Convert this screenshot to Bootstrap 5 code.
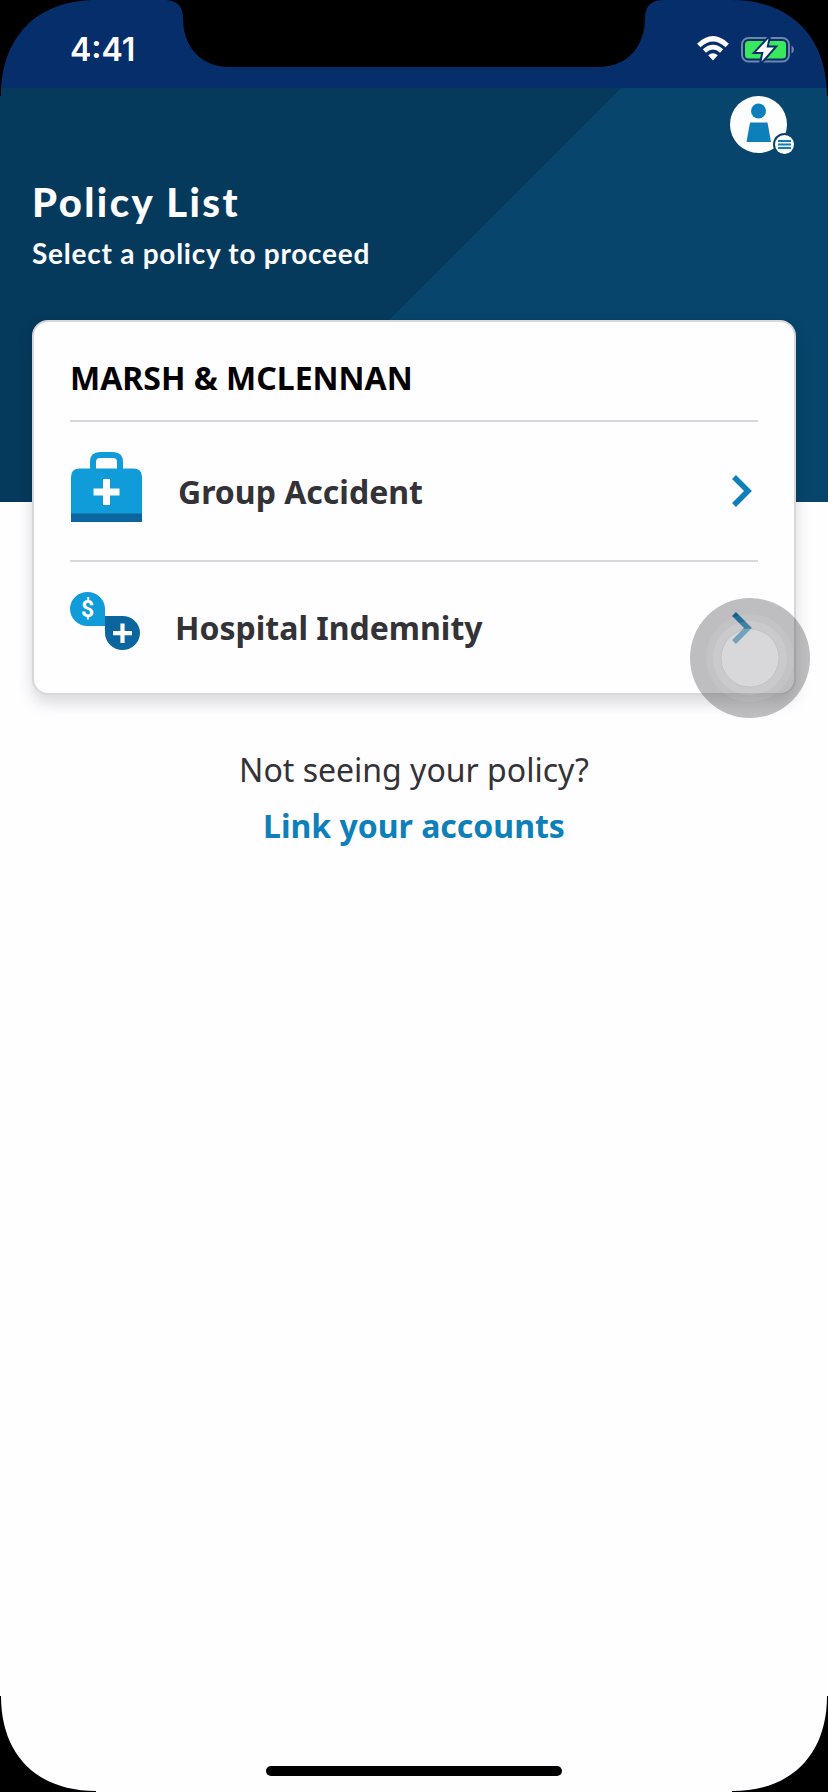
<!DOCTYPE html>
<html lang="en">
<head>
<meta charset="utf-8">
<meta name="viewport" content="width=device-width, initial-scale=1">
<title>Policy List</title>
<link href="https://cdn.jsdelivr.net/npm/bootstrap@5.3.0/dist/css/bootstrap.min.css" rel="stylesheet">
<style>
body{margin:0;background:#fefdff;font-family:"Noto Sans",sans-serif;color:#333236;overflow:hidden}
.screen{width:828px;height:1792px;background:#fefdff}
.bezel{left:0;top:0;z-index:5;pointer-events:none}
.status{height:88px;background:#052e6b;padding:0 33px 0 70px}
.clock{font:600 32px/40px Inter,sans-serif;color:#fff;margin-top:30px}
.status-icons{gap:12px;margin-top:36px}
.hero{height:414px;background:linear-gradient(135deg,#053a5d 439px,#07456c 440px);padding:8px 32px 0;color:#fefdff}
.hero h1{font:900 40px/48px Lato,sans-serif;letter-spacing:2.45px;margin:18px 0 0}
.hero p{font:700 28px/34px Lato,sans-serif;letter-spacing:.75px;margin:10px 0 0}
.profile{height:64px}
.policies{margin:-182px 32px 0;height:375px;border:2px solid #d8d7da;border-radius:16px;padding:0 36px;background:#fefdff;box-shadow:0 8px 16px rgba(0,0,0,.15)}
.group-name{font-size:32px;line-height:44px;font-weight:700;color:#000;height:98px;padding-top:34px;margin:0;white-space:nowrap}
.policy{border-top:2px solid #d8d7da;color:#333236;text-decoration:none;font-size:32px;line-height:44px;font-weight:700;padding-right:6px}
.policy.first{height:140px}
.policy.second{height:133px}
.t-group{margin-left:36px;padding-top:1px}
.t-hospital{margin-left:35px}
.icon-bag{margin-bottom:9px}
.icon-care{margin-bottom:13px}
.link{color:#0e80b9;font-weight:700;text-decoration:none}
.help{font-size:32px;line-height:56px;margin-top:47px}
.touch{left:690px;top:598px;z-index:4}
.homebar{width:296px;height:10px;border-radius:5px;background:#000;margin-bottom:16px}
</style>
</head>
<body>
<div class="screen position-relative d-flex flex-column overflow-hidden">
  <div class="status d-flex justify-content-between align-items-start">
    <div class="clock">4:41</div>
    <div class="status-icons d-flex">
      <svg width="32" height="26" viewBox="0 0 32 26" fill="none" stroke="#fefdff">
        <path d="M1.8 9.5Q16-4 30.2 9.5" stroke-width="5"/>
        <path d="M7.4 15Q16 7.4 24.6 15" stroke-width="4.6"/>
        <path d="M11.2 19.3Q16 15.4 20.8 19.3L16 24.6z" fill="#fefdff" stroke="none"/>
      </svg>
      <svg width="54" height="27" viewBox="0 0 54 27">
        <rect x="1" y="2" width="47" height="23.5" rx="6.5" fill="none" stroke="#6d86b0" stroke-width="2"/>
        <path d="M50.5 9.5Q53 11 53 13.5T50.5 17.5z" fill="#6d86b0"/>
        <rect x="4" y="5" width="41" height="17.5" rx="3.5" fill="#39e85d"/>
        <path d="M27.5 2.5L15 16H22.5L20.5 25.5L33 11.5H25.5z" fill="#fefdff" stroke="#052e6b" stroke-width="4" paint-order="stroke"/>
      </svg>
    </div>
  </div>
  <header class="hero">
    <div class="profile d-flex justify-content-end">
      <svg width="66" height="60" viewBox="0 0 66 60">
        <circle cx="28.5" cy="28.5" r="28.5" fill="#fefdff"/>
        <circle cx="28.5" cy="15" r="7.5" fill="#0e80b9"/>
        <path d="M20 26.5H37.5L41 46H16.5z" fill="#0e80b9"/>
        <circle cx="54.5" cy="48.5" r="11.5" fill="#07456c"/>
        <circle cx="54.5" cy="48.5" r="9.5" fill="#fefdff"/>
        <path d="M48 45H61M48 48.5H61M48 52H61" stroke="#0e80b9" stroke-width="1.8"/>
      </svg>
    </div>
    <h1>Policy List</h1>
    <p>Select a policy to proceed</p>
  </header>
  <main>
    <section class="policies card">
      <h2 class="group-name">MARSH &amp; MCLENNAN</h2>
      <a href="#" class="policy first d-flex align-items-center">
        <svg class="icon-bag" width="72" height="72" viewBox="0 0 72 72">
          <path d="M23 20V11Q23 4 30 4H43Q50 4 50 11V20" fill="none" stroke="#109bd9" stroke-width="6"/>
          <path d="M1 63V26Q1 17.5 9.5 17.5H63.500Q72 17.5 72 26V63z" fill="#109bd9"/>
          <path d="M1 62.5H72V71H1z" fill="#0b66a0"/>
          <path d="M36.5 28V54M23.5 41H49.5" stroke="#fefdff" stroke-width="7"/>
        </svg>
        <span class="flex-grow-1 t-group">Group Accident</span>
        <svg width="20" height="32" viewBox="0 0 20 32" fill="none" stroke="#0e80b9" stroke-width="5.5"><path d="M2 2L16 16L2 30"/></svg>
      </a>
      <a href="#" class="policy second d-flex align-items-center">
        <svg class="icon-care" width="70" height="58" viewBox="0 0 70 58">
          <path d="M17.500 0A17.500 17 0 0 1 35 17V34H17.500A17.500 17 0 0 1 17.500 0z" fill="#109bd9"/>
          <path d="M35 24H52.500A17.500 17 0 1 1 35 41z" fill="#0b66a0"/>
          <text x="17.500" y="25" text-anchor="middle" font-family="Roboto,sans-serif" font-size="23" font-weight="700" fill="#fefdff">$</text>
          <path d="M52.500 31.500V51M43 41.200H62" stroke="#fefdff" stroke-width="4.200"/>
        </svg>
        <span class="flex-grow-1 t-hospital">Hospital Indemnity</span>
        <svg width="20" height="32" viewBox="0 0 20 32" fill="none" stroke="#0e80b9" stroke-width="5.5"><path d="M2 2L16 16L2 30"/></svg>
      </a>
    </section>
    <div class="help text-center">
      <div>Not seeing your policy?</div>
      <a href="#" class="link">Link your accounts</a>
    </div>
  </main>
  <div class="homebar mt-auto mx-auto flex-shrink-0"></div>

  <!-- floating touch button -->
  <svg class="touch position-absolute" width="120" height="120" viewBox="0 0 120 120">
    <circle cx="60" cy="60" r="60" fill="#19191c" fill-opacity=".28"/>
    <circle cx="60" cy="60" r="44" fill="#fff" fill-opacity=".08"/>
    <circle cx="60" cy="60" r="37" fill="#fff" fill-opacity=".13"/>
    <circle cx="60" cy="60" r="29" fill="#fff" fill-opacity=".27" stroke="#b5b4b8" stroke-opacity=".5"/>
  </svg>
  <!-- rounded device corners and notch -->
  <svg class="bezel position-absolute" width="828" height="1792" viewBox="0 0 828 1792">
    <path d="M0 0H96C37 0 1 37 1 96H0zM828 0H732C791 0 827 37 827 96H828zM0 1792V1696H1C1 1755 37 1791 96 1791V1792zM828 1792V1696H827C827 1755 791 1791 732 1791V1792z"/>
    <path d="M166 0Q183 1 183 18C183 46 200 67 230 67H598C628 67 645 46 645 18Q645 1 662 0z"/>
  </svg>
</div>
<script src="https://cdn.jsdelivr.net/npm/bootstrap@5.3.0/dist/js/bootstrap.bundle.min.js"></script>
</body>
</html>
